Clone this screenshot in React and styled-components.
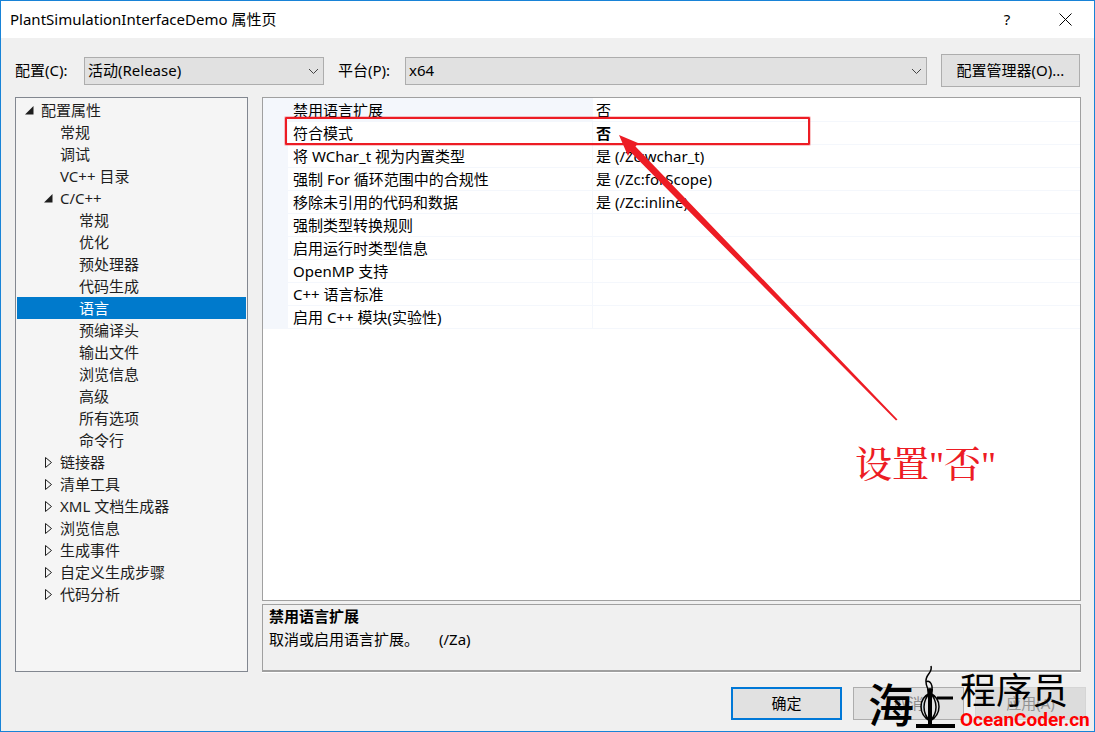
import React from "react";
import styled, { createGlobalStyle } from "styled-components";

const GlobalStyle = createGlobalStyle`
  * { box-sizing: border-box; }
  body { margin: 0; background: #f0f0f0; }
  body, button, select, table {
    font-family: "Noto Sans", "Noto Sans CJK SC", sans-serif;
    font-size: 15px;
    line-height: 22px;
    color: #000;
  }
`;

const Dialog = styled.div`
  position: relative;
  display: flex;
  flex-direction: column;
  min-height: 100vh;
  border: 1px solid #1883d7;
  background: #f0f0f0;
  overflow: hidden;
`;

const TitleBar = styled.header`
  display: flex;
  align-items: center;
  height: 37px;
  padding: 0 0 1px 9px;
  background: #fff;
`;

const Title = styled.h1`
  flex: 1;
  margin: 0;
  font-size: 15px;
  font-weight: 400;
  white-space: nowrap;
`;

const CaptionButton = styled.button`
  display: flex;
  align-items: center;
  justify-content: center;
  width: 58px;
  height: 34px;
  padding: 0;
  border: 0;
  background: transparent;
`;

const Toolbar = styled.div`
  display: flex;
  align-items: center;
  padding: 16px 14px 10px;
`;

const FieldLabel = styled.label`
  flex: none;
  width: ${(p) => p.$width}px;
  padding-bottom: 2px;
  white-space: nowrap;
`;

const Combo = styled.div`
  position: relative;
  flex: ${(p) => (p.$grow ? "1 1 0" : "none")};
  width: 240px;
  min-width: 0;
  margin-right: 14px;

  svg {
    position: absolute;
    right: 5px;
    top: 11px;
    pointer-events: none;
  }
`;

const Select = styled.select`
  display: block;
  width: 100%;
  height: 28px;
  padding: 0 24px 2px 3px;
  appearance: none;
  border: 1px solid #adadad;
  border-radius: 0;
  background: #e1e1e1;
`;

const PushButton = styled.button`
  flex: none;
  width: ${(p) => (p.$wide ? 139 : 111)}px;
  height: 33px;
  padding: 0 0 2px;
  border: ${(p) => (p.$primary ? "2px solid #0078d7" : "1px solid #adadad")};
  background: #e1e1e1;
  color: ${(p) => (p.$faded ? "#8c8c8c" : "#000")};
  white-space: nowrap;

  &:disabled {
    border-color: #d5d5d5;
    background: #dcdcdc;
    color: #939393;
  }
`;

const Content = styled.main`
  flex: 1;
  display: flex;
  gap: 14px;
  padding: 0 13px 0 14px;
`;

const Tree = styled.ul`
  flex: none;
  width: 233px;
  margin: 0;
  padding: 1px;
  border: 1px solid #828790;
  background: #f5f5f5;
  list-style: none;
  color: #1e1e1e;
`;

const TreeItem = styled.li`
  display: flex;
  align-items: center;
  height: 22px;
  padding-left: ${(p) => 5 + p.$level * 19}px;
  white-space: nowrap;
  background: ${(p) => (p.$selected ? "#007acc" : "transparent")};
  color: ${(p) => (p.$selected ? "#fff" : "inherit")};
`;

const Twisty = styled.span`
  display: flex;
  flex: none;
  width: 19px;
  padding-left: 3px;
`;

const Right = styled.div`
  flex: 1;
  min-width: 0;
  display: flex;
  flex-direction: column;
  gap: 3px;
`;

const GridPanel = styled.section`
  position: relative;
  flex: 1;
  border: 1px solid #a0a0a0;
  background: #fff;
`;

const Grid = styled.table`
  width: 100%;
  table-layout: fixed;
  border-collapse: separate;
  border-spacing: 0;

  td, th {
    height: 23px;
    padding: 0 0 0 3px;
    border-bottom: 1px solid #f4f7fc;
    font-weight: 400;
    text-align: left;
    white-space: nowrap;
  }
  th {
    width: 330px;
    padding-left: 5px;
    border-left: 25px solid #f4f7fc;
    border-right: 1px solid #f4f7fc;
  }
  tr:first-child > * { height: 24px; }
  tr:first-child th { background: #f4f7fc; }
`;

const Value = styled.td`
  && { font-weight: ${(p) => (p.$changed ? 700 : 400)}; }
`;

const Highlight = styled.div`
  position: absolute;
  left: 22px;
  top: 19px;
  width: 525px;
  height: 28px;
  border: 2px solid #ed1c24;
  border-radius: 1px;
  box-shadow: 0 0 0 1px rgba(237, 28, 36, 0.25);
`;

const Arrow = styled.svg`
  position: absolute;
  left: 355px;
  top: 36px;
`;

const Note = styled.div`
  position: absolute;
  left: 592px;
  top: 344px;
  font-family: "Liberation Serif", "Noto Serif CJK SC", "Noto Sans CJK SC", serif;
  font-size: 37px;
  font-weight: 500;
  line-height: 48px;
  color: #ed1c24;
  white-space: nowrap;
`;

const Description = styled.section`
  flex: none;
  height: 68px;
  padding: 0 6px;
  border: 1px solid #a0a0a0;
  border-bottom-width: 2px;
  box-shadow: 0 1px 0 #fff;
`;

const DescriptionTitle = styled.h2`
  margin: 0;
  font-size: 15px;
  line-height: 23px;
  font-weight: 700;
`;

const DescriptionText = styled.p`
  display: flex;
  gap: 20px;
  margin: 0;
  line-height: 23px;
`;

const Footer = styled.footer`
  display: flex;
  justify-content: flex-end;
  gap: 11px;
  padding: 15px 8px 11px;
`;

const Watermark = styled.div`
  position: absolute;
  right: 4px;
  bottom: 0;
  display: flex;
  align-items: flex-end;
  height: 66px;
  pointer-events: none;
  color: #000;
`;

const BigGlyph = styled.span`
  margin-right: 2px;
  font-family: "Noto Sans CJK SC", sans-serif;
  font-size: 46px;
  line-height: 58px;
  font-weight: 500;
`;

const Brand = styled.div`
  display: flex;
  flex-direction: column;
  width: 130px;
  margin-left: 4px;
`;

const BrandName = styled.span`
  font-size: 36px;
  line-height: 36px;
  white-space: nowrap;
`;

const BrandSite = styled.span`
  font-family: Roboto, sans-serif;
  font-size: 19px;
  line-height: 22px;
  font-weight: 700;
  color: #f00;
`;

const Chevron = () => (
  <svg width="11" height="7" viewBox="0 0 11 7" fill="none" stroke="#444" aria-hidden="true">
    <path d="M1 1l4.500 4.500L10 1" />
  </svg>
);

const OpenMark = () => (
  <svg width="9" height="9" viewBox="0 0 9 9" aria-hidden="true">
    <path d="M8.500 0v8.500H0z" fill="#1e1e1e" />
  </svg>
);

const ClosedMark = () => (
  <svg width="9" height="13" viewBox="0 0 9 13" fill="none" stroke="#1e1e1e" aria-hidden="true">
    <path d="M1.500 1.500v10L7.500 6.500z" />
  </svg>
);

const Lamp = () => (
  <svg width="40" height="66" viewBox="0 0 40 66" aria-hidden="true" fill="none" stroke="#000">
    <path d="M15 1c2 7-6 8-5 16 0 4 2 6 3 10M10 17c4-3 8 4 5 11" strokeWidth="1.500" />
    <path d="M11 24l3-1 3 1-1 10v26h-4V34z" fill="#000" stroke="none" />
    <path d="M14 28C2 34 2 49 14 56 26 49 26 34 14 28zM14 28c-8 8-8 20 0 28 8-8 8-20 0-28z" strokeWidth="1.500" />
    <path d="M21 33h16" strokeWidth="3" />
    <path d="M0 61h39" strokeWidth="4" />
  </svg>
);

const tree = [
  ["配置属性", 0, "open"],
  ["常规", 1],
  ["调试", 1],
  ["VC++ 目录", 1],
  ["C/C++", 1, "open"],
  ["常规", 2],
  ["优化", 2],
  ["预处理器", 2],
  ["代码生成", 2],
  ["语言", 2],
  ["预编译头", 2],
  ["输出文件", 2],
  ["浏览信息", 2],
  ["高级", 2],
  ["所有选项", 2],
  ["命令行", 2],
  ["链接器", 1, "closed"],
  ["清单工具", 1, "closed"],
  ["XML 文档生成器", 1, "closed"],
  ["浏览信息", 1, "closed"],
  ["生成事件", 1, "closed"],
  ["自定义生成步骤", 1, "closed"],
  ["代码分析", 1, "closed"],
];

const properties = [
  ["禁用语言扩展", "否"],
  ["符合模式", "否", true],
  ["将 WChar_t 视为内置类型", "是 (/Zc:wchar_t)"],
  ["强制 For 循环范围中的合规性", "是 (/Zc:forScope)"],
  ["移除未引用的代码和数据", "是 (/Zc:inline)"],
  ["强制类型转换规则", ""],
  ["启用运行时类型信息", ""],
  ["OpenMP 支持", ""],
  ["C++ 语言标准", ""],
  ["启用 C++ 模块(实验性)", ""],
];

export default function App() {
  return (
    <>
      <GlobalStyle />
      <Dialog role="dialog" aria-labelledby="title">
        <TitleBar>
          <Title id="title">PlantSimulationInterfaceDemo 属性页</Title>
          <CaptionButton>?</CaptionButton>
          <CaptionButton aria-label="关闭">
            <svg width="13" height="13" viewBox="0 0 13 13" stroke="#000" aria-hidden="true">
              <path d="M.5.5l12 12M12.500.5l-12 12" />
            </svg>
          </CaptionButton>
        </TitleBar>

        <Toolbar>
          <FieldLabel htmlFor="config" $width={69}>配置(C):</FieldLabel>
          <Combo>
            <Select id="config"><option>活动(Release)</option></Select>
            <Chevron />
          </Combo>
          <FieldLabel htmlFor="platform" $width={67}>平台(P):</FieldLabel>
          <Combo $grow>
            <Select id="platform"><option>x64</option></Select>
            <Chevron />
          </Combo>
          <PushButton $wide>配置管理器(O)...</PushButton>
        </Toolbar>

        <Content>
          <Tree role="tree" aria-label="配置属性">
            {tree.map(([name, level, state], i) => (
              <TreeItem
                key={i}
                role="treeitem"
                aria-level={level + 1}
                aria-selected={name === "语言"}
                aria-expanded={state ? state === "open" : undefined}
                $level={level}
                $selected={name === "语言"}
              >
                <Twisty>
                  {state === "open" && <OpenMark />}
                  {state === "closed" && <ClosedMark />}
                </Twisty>
                {name}
              </TreeItem>
            ))}
          </Tree>

          <Right>
            <GridPanel>
              <Grid>
                <tbody>
                  {properties.map(([name, value, changed]) => (
                    <tr key={name}>
                      <th scope="row">{name}</th>
                      <Value $changed={changed}>{value}</Value>
                    </tr>
                  ))}
                </tbody>
              </Grid>
              <Highlight />
              <Arrow width="281" height="288" viewBox="0 0 281 288" aria-hidden="true">
                <path d="M1 1L20 9L17.500 12.500L279.500 285.500L278 286.500L12 17.500L10 22z" fill="#ed1c24" />
              </Arrow>
              <Note>设置"否"</Note>
            </GridPanel>
            <Description>
              <DescriptionTitle>禁用语言扩展</DescriptionTitle>
              <DescriptionText><span>取消或启用语言扩展。</span><span>(/Za)</span></DescriptionText>
            </Description>
          </Right>
        </Content>

        <Footer>
          <PushButton $primary>确定</PushButton>
          <PushButton $faded>取消</PushButton>
          <PushButton disabled>应用(A)</PushButton>
        </Footer>

        <Watermark>
          <BigGlyph>海</BigGlyph>
          <Lamp />
          <Brand>
            <BrandName>程序员</BrandName>
            <BrandSite>OceanCoder.cn</BrandSite>
          </Brand>
        </Watermark>
      </Dialog>
    </>
  );
}
